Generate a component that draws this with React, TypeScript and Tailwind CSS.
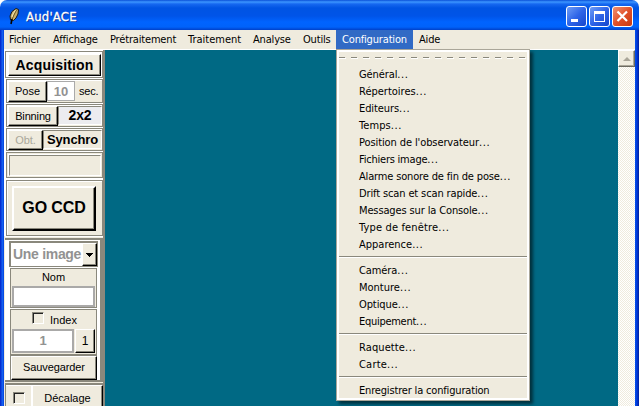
import type { ReactNode } from "react";

const entries: [string, string][][] = [
  [
    ["Général...", "tracking-[-0.1px]"],
    ["Répertoires...", "tracking-[0px]"],
    ["Editeurs...", "tracking-[-0.1px]"],
    ["Temps...", "tracking-[0.1px]"],
    ["Position de l'observateur...", "tracking-[-0.1px]"],
    ["Fichiers image...", "tracking-[-0.22px]"],
    ["Alarme sonore de fin de pose...", "tracking-[-0.16px]"],
    ["Drift scan et scan rapide...", "tracking-[-0.13px]"],
    ["Messages sur la Console...", "tracking-[-0.13px]"],
    ["Type de fenêtre...", "tracking-[0.15px]"],
    ["Apparence...", "tracking-[0px]"],
  ],
  [
    ["Caméra...", "tracking-[-0.1px]"],
    ["Monture...", "tracking-[0px]"],
    ["Optique...", "tracking-[-0.1px]"],
    ["Equipement...", "tracking-[-0.28px]"],
  ],
  [
    ["Raquette...", "tracking-[0.1px]"],
    ["Carte...", "tracking-[0.2px]"],
  ],
  [["Enregistrer la configuration", "tracking-[-0.17px]"]],
];

function Feather() {
  return (
    <svg width="12" height="18" viewBox="0 0 12 18" className="mt-[7px] ml-[8px] shrink-0">
      <path d="M8 1.500L10.500 2.500L10 7L8 11L5.500 13.500L2.500 13L2 9L4 4.500Z" fill="#c9b06b" stroke="#181818" strokeWidth="1" />
      <path d="M8.500 3L5.500 9L3.500 14" fill="none" stroke="#6c5824" strokeWidth="1" />
      <path d="M4 12L3 17" stroke="#000" strokeWidth="1.600" />
      <path d="M7.500 3L5 7L4 10" fill="none" stroke="#f5e7b2" strokeWidth="1" />
    </svg>
  );
}

function WinButton({ close, children }: { close?: boolean; children: ReactNode }) {
  return (
    <div
      className={
        "h-[21px] w-[21px] rounded-[3px] border border-white bg-linear-to-br " +
        (close ? "from-[#f09070] via-[#e15028] to-[#c83a10]" : "from-[#6f9cf5] via-[#2e64e8] to-[#1746cc]")
      }
    >
      <svg width="19" height="19" viewBox="0 0 19 19" shapeRendering={close ? "auto" : "crispEdges"}>
        {children}
      </svg>
    </div>
  );
}

function Frame({ className, children }: { className: string; children?: ReactNode }) {
  return (
    <div className={"border border-[#8a887c] outline-1 outline-white " + className}>
      <div className="flex h-full w-full border-t border-l border-white">{children}</div>
    </div>
  );
}

function Button({ className, children }: { className: string; children: ReactNode }) {
  return (
    <div
      className={
        "flex shrink-0 items-center justify-center border-t border-l border-t-white border-l-white border-r border-b border-r-black border-b-black whitespace-nowrap shadow-[inset_-1px_-1px_#8a887c] " +
        className
      }
    >
      {children}
    </div>
  );
}

function Check() {
  return (
    <span className="block h-[12px] w-[12px] shrink-0 border border-t-[#8a887c] border-r-white border-b-white border-l-[#8a887c] shadow-[inset_1px_1px_#222]" />
  );
}

const small = " font-['Liberation_Sans',Arial,sans-serif] text-[11px] ";

export default function App() {
  return (
    <div className="relative flex h-[406px] w-[639px] flex-col overflow-hidden bg-white font-['DejaVu_Sans_Condensed','DejaVu_Sans',sans-serif] text-[11px] leading-[17px] text-black">
      <div className="flex h-[30px] shrink-0 rounded-t-[7px] bg-[linear-gradient(180deg,#0a50d8_0px,#3c96ff_2px,#1668f0_4px,#0054e3_8px,#0054e8_16px,#0064ff_22px,#0062fa_27px,#0040c8_30px)]">
        <Feather />
        <span className="mt-[8px] ml-[6px] text-[13px] leading-[18px] tracking-[0.2px] text-white [-webkit-text-stroke:0.3px_white] [text-shadow:1px_1px_#0a2f8c]">Aud'ACE</span>
        <div className="mt-[6px] mr-[6px] ml-auto flex gap-[2px]">
          <WinButton><rect x="4" y="12" width="7" height="3" fill="#fff" /></WinButton>
          <WinButton><path d="M4 4h11v11h-11zM5 7v7h9v-7z" fill="#fff" fillRule="evenodd" /></WinButton>
          <WinButton close><path d="M4.500 4.500L14 14M14 4.500L4.500 14" stroke="#fff" strokeWidth="2.200" /></WinButton>
        </div>
      </div>

      <div className="flex min-h-0 flex-1">
        <div className="w-[4px] shrink-0 bg-[linear-gradient(90deg,#0020c8,#1560f0_60%,#0040dc)]" />
        <div className="flex min-w-0 flex-1 flex-col">
          <div className="flex h-[20px] shrink-0 border-b border-white bg-[#efebde] leading-[19px] tracking-[-0.17px] whitespace-nowrap">
            <span className="w-[44px] shrink-0 pl-[5px]">Fichier</span>
            <span className="w-[57px] shrink-0 pl-[5px]">Affichage</span>
            <span className="w-[78px] shrink-0 pl-[5px]">Prétraitement</span>
            <span className="w-[65px] shrink-0 pl-[5px] tracking-normal">Traitement</span>
            <span className="w-[50px] shrink-0 pl-[5px]">Analyse</span>
            <span className="w-[38px] shrink-0 pl-[5px]">Outils</span>
            <span className="w-[77px] shrink-0 bg-[#316ac5] pl-[6px] text-white">Configuration</span>
            <span className="pl-[6px]">Aide</span>
          </div>
          <div className="flex min-h-0 flex-1">
            <div className="flex w-[101px] shrink-0 flex-col overflow-hidden border-r-[2px] border-[#8a887c] bg-[#efebde]">
              <div className="flex shrink-0 flex-col bg-white pt-[1px] pl-[1px]">
                <Frame className="h-[27px] w-[98px] bg-white p-px">
                  <Button className="h-full w-full bg-[#efebde] font-['Liberation_Sans',Arial,sans-serif] text-[14px] font-bold tracking-[0.15px]">Acquisition</Button>
                </Frame>
                <Frame className="mt-[1px] ml-[1px] h-[24px] w-[97px] bg-[#efebde]">
                  <Button className={"h-[21px] w-[39px]" + small}>Pose</Button>
                  <span className="h-[20px] w-[28px] shrink-0 border border-[#aaa] bg-white text-center font-['Liberation_Sans',Arial,sans-serif] text-[13px] leading-[19px] font-bold text-[#929292]">10</span>
                  <span className={"pl-[4px] leading-[20px] tracking-[-0.2px]" + small}>sec.</span>
                </Frame>
                <Frame className="mt-[1px] ml-[1px] h-[23px] w-[97px] bg-[#efebde]">
                  <Button className={"h-[20px] w-[50px] tracking-[-0.15px]" + small}>Binning</Button>
                  <span className="h-[19px] flex-1 border border-[#8a887c] border-r-white border-b-white bg-[#ececf0] text-center font-['Liberation_Sans',Arial,sans-serif] text-[14px] leading-[17px] font-bold tracking-[-0.2px]">2x2</span>
                </Frame>
                <Frame className="mt-[1px] ml-[1px] h-[23px] w-[97px] bg-[#efebde]">
                  <Button className={"h-[20px] w-[35px] tracking-[-0.1px] text-[#aaa89b]" + small}>Obt.</Button>
                  <span className="h-[19px] flex-1 border border-[#8a887c] border-r-white border-b-white text-center font-['Liberation_Sans',Arial,sans-serif] text-[13px] leading-[18px] font-bold tracking-[-0.15px]">Synchro</span>
                </Frame>
                <Frame className="mt-[1px] ml-[1px] h-[26px] w-[97px] bg-[#efebde] p-px">
                  <div className="h-full w-full border border-t-[#8a887c] border-r-white border-b-white border-l-[#8a887c]" />
                </Frame>
                <Frame className="mt-[2px] ml-[1px] h-[56px] w-[97px] bg-[#efebde]">
                  <div className="mt-[4px] ml-[4px] flex h-[45px] w-[84px] items-center justify-center border-2 border-t-white border-r-black border-b-black border-l-white pb-[2px] font-['Liberation_Sans',Arial,sans-serif] text-[16px] font-bold tracking-[-0.1px] shadow-[inset_-1px_-1px_#8a887c]">GO CCD</div>
                </Frame>
              </div>
              <div className="mt-[2px] ml-[1px] h-[144px] w-[98px] shrink-0 border-t-2 border-r-3 border-b-2 border-[#8a887c] bg-white pt-px pl-[3px]">
                <div className="ml-px flex h-[26px] w-[89px] border border-t-2 border-l-2 border-[#8a887c] bg-white">
                  <span className="min-w-0 flex-1 pl-[2px] font-['Liberation_Sans',Arial,sans-serif] text-[14px] leading-[23px] font-bold tracking-[-0.3px] whitespace-nowrap text-[#929292]">Une image</span>
                  <Button className="h-full w-[15px] bg-[#efebde]">
                    <svg width="7" height="4" viewBox="0 0 7 4" shapeRendering="crispEdges"><path d="M0 0H7L3.500 4Z" /></svg>
                  </Button>
                </div>
                <div className={"mt-px ml-[2px] h-[40px] w-[87px] border border-[#8a887c] bg-[#efebde] px-px text-center" + small}>
                  <div className="h-[17px] leading-[17px]">Nom</div>
                  <div className="h-[21px] border-2 border-[#aaa9a8] bg-white" />
                </div>
                <div className={"mt-px ml-[2px] h-[46px] w-[87px] border border-[#8a887c] bg-[#efebde] px-px" + small}>
                  <div className="flex h-[19px] items-start gap-[6px] pt-[2px] pl-[20px] leading-[16px]"><Check /><span>Index</span></div>
                  <div className="flex">
                    <span className="h-[24px] w-[62px] border-2 border-[#aaa9a8] bg-white text-center text-[13px] leading-[20px] font-bold text-[#929292]">1</span>
                    <Button className="ml-px h-[24px] w-[20px] text-[12px]">1</Button>
                  </div>
                </div>
                <div className="ml-[2px] h-[25px] w-[87px] border-t border-l border-[#8a887c] bg-[#efebde]">
                  <Button className={"h-full w-full pb-[2px] tracking-[-0.1px]" + small}>Sauvegarder</Button>
                </div>
              </div>
              <div className="mt-[1px] ml-[1px] flex h-[30px] w-[98px] shrink-0 border-t-2 border-l border-[#8a887c] bg-[#efebde]">
                <div className="flex w-[26px] shrink-0 justify-center border-t border-r border-white pt-[6px]"><Check /></div>
                <Button className={"h-[27px] flex-1" + small}>Décalage</Button>
              </div>
            </div>
            <div className="flex-1 bg-[#006984]" />
            <div className="w-[17px] bg-[repeating-conic-gradient(#fff_0_25%,#efebde_0_50%)] bg-size-[2px_2px]">
              <div className="flex h-[17px] items-center justify-center border border-t-white border-r-[#6c6a60] border-b-[#6c6a60] border-l-white bg-[#efebde] shadow-[inset_-1px_-1px_#aaa699]">
                <svg width="8" height="4" viewBox="0 0 8 4"><path d="M0 4L4 0L8 4Z" fill="#aaa699" /></svg>
              </div>
            </div>
          </div>
        </div>
        <div className="w-[4px] shrink-0 bg-[linear-gradient(90deg,#0050ee,#0038d8_50%,#001c98)]" />
      </div>

      <div className="absolute top-[49px] left-[336px] h-[352px] w-[194px] border border-[#aaa699] bg-[#efebde] shadow-[3px_3px_3px_#0008]">
        <div className="h-full border-2 border-white pt-[5px]">
          <div className="h-px bg-[repeating-linear-gradient(90deg,#8a887c_0px,#8a887c_6px,transparent_6px,transparent_12px)]" />
          <div className="h-px bg-[repeating-linear-gradient(90deg,#fff_0px,#fff_7px,transparent_7px,transparent_12px)]" />
          <div className="pt-[7px]">
            {entries.map((group, i) => (
              <div key={i}>
                {i > 0 && <div className="mt-[3px] mb-[4px] h-[2px] border-t border-b border-t-[#8a887c] border-b-white" />}
                {group.map(([label, tracking]) => (
                  <div key={label} className={"h-[17px] pl-[20px] whitespace-nowrap " + tracking}>
                    {label.replace("...", "")}
                    {label.endsWith("...") && <span className="tracking-[0.6px]">...</span>}
                  </div>
                ))}
              </div>
            ))}
          </div>
        </div>
      </div>
    </div>
  );
}
